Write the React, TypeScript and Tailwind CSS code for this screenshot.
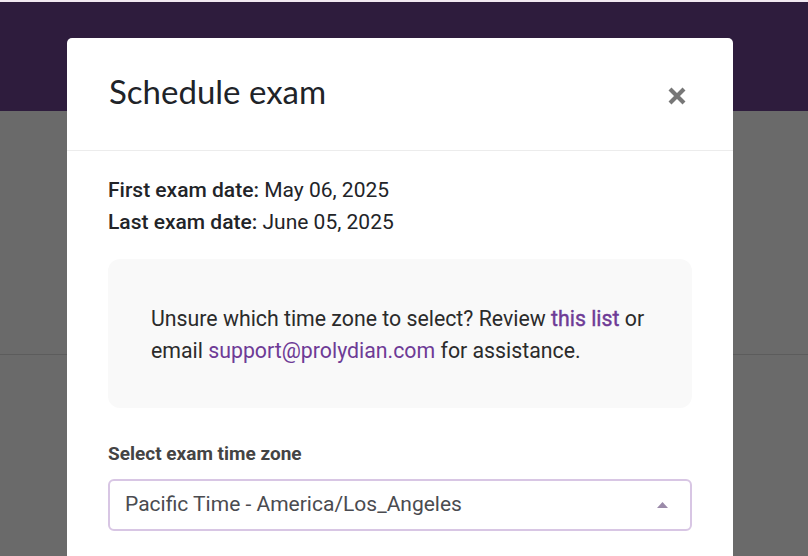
const body = { fontFamily: "Roboto, 'Liberation Sans', sans-serif" };

function CloseIcon() {
  return (
    <svg width="20" height="20" viewBox="0 0 20 20" aria-hidden="true">
      <path d="M3 3 L17 17 M17 3 L3 17" stroke="#777777" strokeWidth="4.2" strokeLinecap="butt" />
    </svg>
  );
}

export default function App() {
  return (
    <div className="relative h-[556px] w-[808px] overflow-hidden bg-[#6a6a6a]" style={body}>
      {/* page behind the backdrop */}
      <div className="h-[2px] bg-[#f1e8f1]" />
      <div className="h-[109px] bg-[#2e1c3d]" />
      <div className="h-[243px]" />
      <div className="h-px bg-[#5c5c5c]" />

      {/* dialog */}
      <div className="absolute left-[67px] top-[38px] w-[666px] rounded-[5px] bg-white">
        <div className="flex h-[113px] items-center justify-between border-b border-[#ececec] pl-[42px] pr-[44px]">
          <h2 className="pb-[4px] text-[33px] font-normal text-[#202328]" style={{ fontFamily: "Lato, 'Open Sans', sans-serif" }}>
            Schedule exam
          </h2>
          <button className="mt-[4px] flex h-6 w-6 items-center justify-center">
            <CloseIcon />
          </button>
        </div>

        <div className="px-[41px] pt-[23px] pb-[30px]">
          <div className="text-[21px] leading-[32px] text-[#222428]">
            <p>
              <span className="font-medium">First exam date:</span> May 06, 2025
            </p>
            <p>
              <span className="font-medium">Last exam date:</span> June 05, 2025
            </p>
          </div>

          <div className="mt-[21px] rounded-[12px] bg-[#f9f9f9] px-[43px] pt-[44px] pb-[41px] text-[21.3px] leading-[32px] text-[#2b2b2b]">
            Unsure which time zone to select? Review{" "}
            <a className="text-[#6e3b96] [-webkit-text-stroke:0.4px_#6e3b96]">this list</a> or email{" "}
            <a className="text-[#6e3b96]">support@prolydian.com</a> for assistance.
          </div>

          <label className="mt-[34px] block text-[19px] font-bold leading-[24px] text-[#444444]">
            Select exam time zone
          </label>
          <div className="mt-[13px] flex h-[52px] items-center justify-between rounded-[6px] border-2 border-[#d8c6e4] pl-[15px] pr-[22px] text-[21px] text-[#4a4b50]">
            <span>Pacific Time - America/Los_Angeles</span>
            <svg width="11" height="6" viewBox="0 0 11 6" aria-hidden="true">
              <path d="M5.5 0 L11 6 L0 6 Z" fill="#9b8aa9" />
            </svg>
          </div>
        </div>
      </div>
    </div>
  );
}
